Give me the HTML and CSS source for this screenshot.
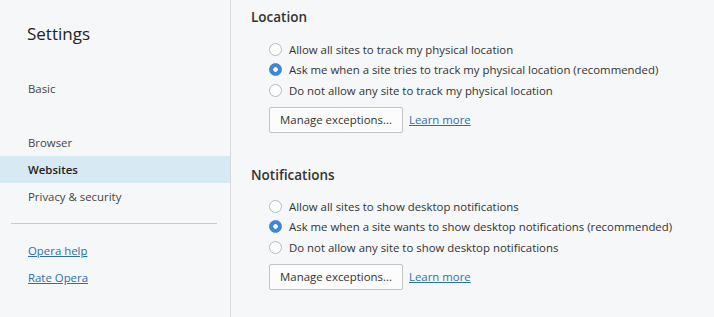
FILE: index.html
```html
<!DOCTYPE html>
<html lang="en">
<head>
    <meta charset="UTF-8">
    <title>Settings</title>
    <link rel="stylesheet" href="styles.css">
</head>
<body>
    <div class="page">
        <nav class="sidebar">
            <h1>Settings</h1>
            <ul class="menu">
                <li class="menu-basic">Basic</li>
                <li class="menu-browser">Browser</li>
                <li class="active">Websites</li>
                <li>Privacy &amp; security</li>
            </ul>
            <hr>
            <ul class="links">
                <li><a href="#">Opera help</a></li>
                <li><a href="#">Rate Opera</a></li>
            </ul>
        </nav>

        <main class="content">
            <section class="block">
                <h2>Location</h2>
                <label class="radio"><input type="radio" name="loc"> Allow all sites to track my physical location</label>
                <label class="radio"><input type="radio" name="loc" checked> Ask me when a site tries to track my physical location (recommended)</label>
                <label class="radio"><input type="radio" name="loc"> Do not allow any site to track my physical location</label>
                <div class="actions">
                    <button>Manage exceptions...</button>
                    <a href="#">Learn more</a>
                </div>
            </section>

            <section class="block">
                <h2>Notifications</h2>
                <label class="radio"><input type="radio" name="notif"> Allow all sites to show desktop notifications</label>
                <label class="radio"><input type="radio" name="notif" checked> Ask me when a site wants to show desktop notifications (recommended)</label>
                <label class="radio"><input type="radio" name="notif"> Do not allow any site to show desktop notifications</label>
                <div class="actions">
                    <button>Manage exceptions...</button>
                    <a href="#">Learn more</a>
                </div>
            </section>
        </main>
    </div>
</body>
</html>
```

FILE: styles.css
```css
body {
    margin: 0;
    background-color: #f6f7f9;
    color: #333;
    font-family: "Open Sans", "Noto Sans", sans-serif;
    font-size: 11.4px;
}

.page {
    display: flex;
    height: 317px;
    overflow: hidden;
}

.sidebar {
    width: 230px;
    flex-shrink: 0;
    border-right: 1px solid #d6d8dc;
}

.sidebar h1 {
    font-weight: normal;
    font-size: 17px;
    margin: 22px 0 0 27px;
    color: #222;
}

.menu, .links {
    list-style: none;
    margin: 0;
    padding: 0;
}

.menu li {
    height: 27px;
    line-height: 27px;
    padding-left: 28px;
    color: #444;
}

.menu .menu-basic {
    margin-top: 30px;
}

.menu .menu-browser {
    margin-top: 27px;
}

.menu li.active {
    background-color: #d7e9f3;
    color: #222;
    font-weight: 600;
}

.sidebar hr {
    border: 0;
    border-top: 1px solid #c8cacd;
    margin: 13px 13px 13px 11px;
}

.links li {
    height: 27px;
    line-height: 27px;
    padding-left: 28px;
}

a {
    color: #2e6fa8;
    text-decoration: underline;
}

.content {
    flex: 1;
    padding-left: 20px;
}

.block {
    padding-top: 8px;
    height: 150px;
}

.block + .block {
    padding-top: 8px;
}

.block h2 {
    font-size: 13.5px;
    font-weight: 600;
    margin: 0 0 13px;
    color: #333;
}

.block + .block h2 {
    margin-bottom: 12px;
}

.radio {
    display: flex;
    align-items: center;
    height: 20.5px;
    padding-left: 18px;
    color: #333;
}

.radio input {
    appearance: none;
    margin: 0 7px 0 0;
    width: 13px;
    height: 13px;
    border: 1px solid #b8b9bb;
    border-radius: 50%;
    background-color: #fff;
    box-sizing: border-box;
}

.radio input:checked {
    border-color: #3f86d6;
    background: radial-gradient(circle, #fff 0 2px, #3f86d6 2.5px);
}

.actions {
    display: flex;
    align-items: center;
    gap: 6px;
    margin: 6px 0 0 18px;
}

.actions button {
    height: 26px;
    width: 134px;
    font-family: inherit;
    font-size: 11.4px;
    color: #333;
    background-color: #fcfcfc;
    border: 1px solid #c3c4c6;
    border-radius: 2px;
}
```
